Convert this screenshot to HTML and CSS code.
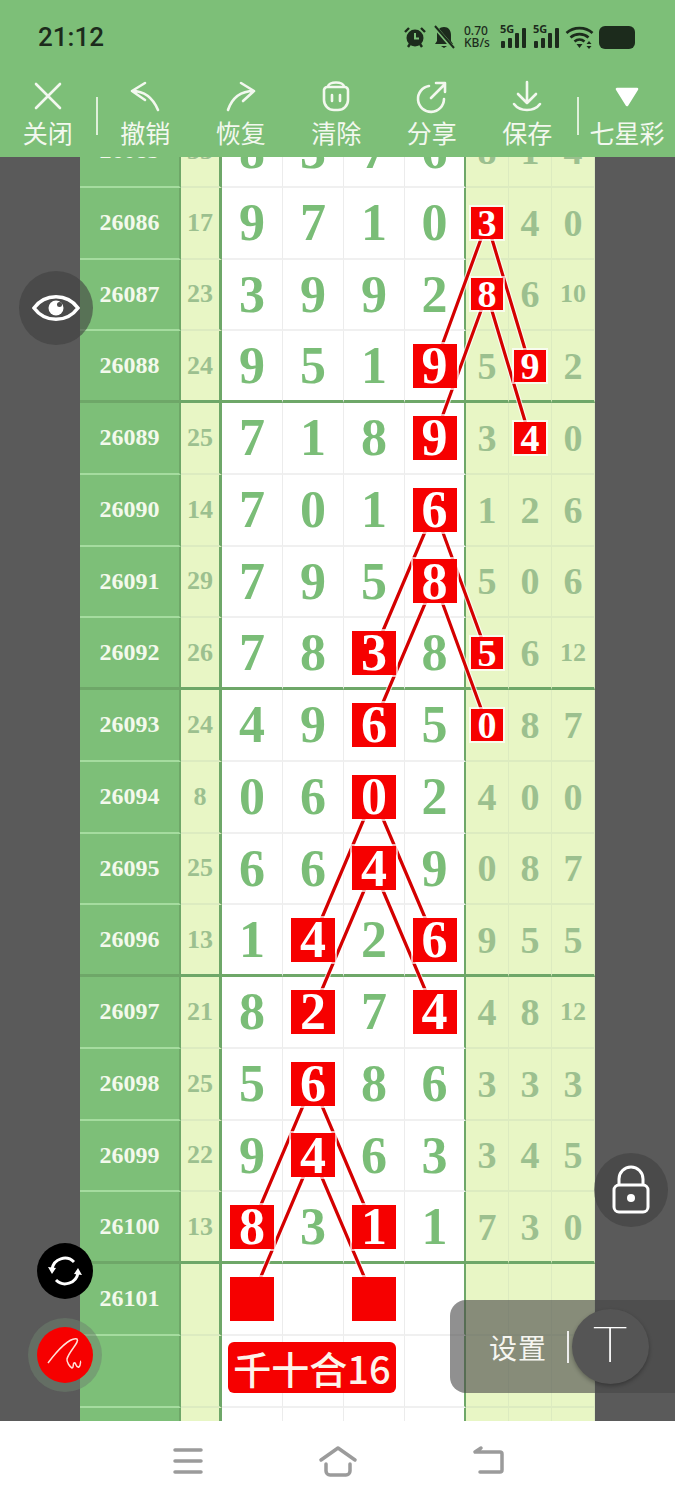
FILE: index.html
```html
<!DOCTYPE html>
<html lang="zh-CN">
<head>
    <meta charset="UTF-8">
    <meta name="viewport" content="width=device-width, initial-scale=1.0">
    <title>七星彩</title>
    <link rel="stylesheet" href="styles.css">
</head>
<body>
    <header class="topbar">
        <div class="status">
            <span class="clock">21:12</span>
            <div class="status-icons">
                <svg class="st-alarm" width="24" height="24" viewBox="0 0 24 24"><circle cx="12" cy="13" r="8.5" fill="#1c2b1c"/><path d="M2 7l4-4M22 7l-4-4M5 22l2-3M19 22l-2-3" stroke="#1c2b1c" stroke-width="2.4" fill="none"/><path d="M12 8v5.5h4" stroke="#7dbf78" stroke-width="2" fill="none"/></svg>
                <svg class="st-bell" width="24" height="24" viewBox="0 0 24 24"><path d="M12 2c-4.500 0-7 3.500-7 8v6l-2 3h18l-2-3v-6c0-4.500-2.500-8-7-8z" fill="#1c2b1c"/><path d="M9 21h6l-3 2z" fill="#1c2b1c"/><path d="M3 2l18 21" stroke="#7dbf78" stroke-width="4"/><path d="M3 1l19 22" stroke="#1c2b1c" stroke-width="2"/></svg>
                <div class="speed"><span>0.70</span><span>KB/s</span></div>
                <div class="sig"><span>5G</span><svg width="27" height="24" viewBox="0 0 27 24"><rect x="1" y="16" width="4" height="7" rx="1"/><rect x="8" y="13" width="4" height="10" rx="1"/><rect x="15" y="8" width="4" height="15" rx="1"/><rect x="22" y="3" width="4" height="20" rx="1"/></svg></div>
                <div class="sig"><span>5G</span><svg width="27" height="24" viewBox="0 0 27 24"><rect x="1" y="16" width="4" height="7" rx="1"/><rect x="8" y="13" width="4" height="10" rx="1"/><rect x="15" y="8" width="4" height="15" rx="1"/><rect x="22" y="3" width="4" height="20" rx="1"/></svg></div>
                <svg class="st-wifi" width="29" height="24" viewBox="0 0 29 24"><path d="M1.500 8c7-6.500 19-6.500 26 0M5.500 12.500c5-4.500 13-4.500 18 0M9.500 16.500c3-2.500 7-2.500 10 0" stroke="#1c2b1c" stroke-width="2.600" fill="none"/><path d="M11.500 19h6l-3 4z" fill="#1c2b1c"/><path d="M24 16l2.500 3h-5zM24 24l2.500-3h-5z" fill="#1c2b1c"/></svg>
                <div class="battery"></div>
            </div>
        </div>
        <nav class="tools">
            <div class="tool">
                <svg class="tool-icon" viewBox="0 0 36 36"><path d="M6 6l24 24M30 6L6 30"/></svg>
                <span>关闭</span>
            </div>
            <i class="tool-sep"></i>
            <div class="tool">
                <svg class="tool-icon" viewBox="0 0 36 36"><path d="M18 5L5 13l13 9M5 13c13 0 21 7 26 19"/></svg>
                <span>撤销</span>
            </div>
            <div class="tool">
                <svg class="tool-icon" viewBox="0 0 36 36"><path d="M18 5l13 8-11 10M31 13C18 13 9 20 5 32"/></svg>
                <span>恢复</span>
            </div>
            <div class="tool">
                <svg class="tool-icon" viewBox="0 0 36 36"><path d="M10 9c0-6 16-6 16 0M6 13a3.500 3.500 0 0 1 3-4h18a3.500 3.500 0 0 1 3 4v9a10 10 0 0 1-10 10h-4a10 10 0 0 1-10-10zM14 17v6M22 17v6"/></svg>
                <span>清除</span>
            </div>
            <div class="tool">
                <svg class="tool-icon" viewBox="0 0 36 36"><path d="M15 8a13 13 0 1 0 15 13M17 20L31 6M22 5h9v9"/></svg>
                <span>分享</span>
            </div>
            <div class="tool">
                <svg class="tool-icon" viewBox="0 0 36 36"><path d="M18 4v21M9 16l9 9 9-9M5 26c6 8 20 8 26 0"/></svg>
                <span>保存</span>
            </div>
            <i class="tool-sep tool-sep-end"></i>
            <div class="tool tool-last">
                <svg class="tool-icon" viewBox="0 0 36 36"><path class="solid" d="M8 11h20l-10 16z"/></svg>
                <span>七星彩</span>
            </div>
        </nav>
    </header>

    <main class="board">
        <div class="sheet">
            <svg class="links" width="515" height="1400" viewBox="80 116 515 1400">
                <defs>
                    <g id="link-set">
                        <path d="M487 222.500L434.500 366M487 222.500L530 366"/>
                        <path d="M487 294.250L434.500 437.750M487 294.250L530 437.750"/>
                        <path d="M434.500 509.500L373.500 653M434.500 509.500L487 653"/>
                        <path d="M434.500 581.250L373.500 724.750M434.500 581.250L487 724.750"/>
                        <path d="M373.500 796.500L312.500 940M373.500 796.500L434.500 940"/>
                        <path d="M373.500 868.250L312.500 1011.750M373.500 868.250L434.500 1011.750"/>
                        <path d="M312.500 1083.500L251.500 1227M312.500 1083.500L373.500 1227"/>
                        <path d="M312.500 1155.250L251.500 1298.750M312.500 1155.250L373.500 1298.750"/>
                    </g>
                </defs>
                <use href="#link-set" class="link-halo"/>
                <use href="#link-set" class="link-line"/>
            </svg>

            <div class="row"><div class="id">26085</div><div class="sum">33</div><div class="d">8</div><div class="d">3</div><div class="d">7</div><div class="d last">6</div><div class="r">8</div><div class="r">1</div><div class="r">4</div></div>
            <div class="row"><div class="id">26086</div><div class="sum">17</div><div class="d">9</div><div class="d">7</div><div class="d">1</div><div class="d last">0</div><div class="r"><b class="hit-s">3</b></div><div class="r">4</div><div class="r">0</div></div>
            <div class="row"><div class="id">26087</div><div class="sum">23</div><div class="d">3</div><div class="d">9</div><div class="d">9</div><div class="d last">2</div><div class="r"><b class="hit-s">8</b></div><div class="r">6</div><div class="r small">10</div></div>
            <div class="row end"><div class="id">26088</div><div class="sum">24</div><div class="d">9</div><div class="d">5</div><div class="d">1</div><div class="d last"><b class="hit">9</b></div><div class="r">5</div><div class="r"><b class="hit-s">9</b></div><div class="r">2</div></div>
            <div class="row"><div class="id">26089</div><div class="sum">25</div><div class="d">7</div><div class="d">1</div><div class="d">8</div><div class="d last"><b class="hit">9</b></div><div class="r">3</div><div class="r"><b class="hit-s">4</b></div><div class="r">0</div></div>
            <div class="row"><div class="id">26090</div><div class="sum">14</div><div class="d">7</div><div class="d">0</div><div class="d">1</div><div class="d last"><b class="hit">6</b></div><div class="r">1</div><div class="r">2</div><div class="r">6</div></div>
            <div class="row"><div class="id">26091</div><div class="sum">29</div><div class="d">7</div><div class="d">9</div><div class="d">5</div><div class="d last"><b class="hit">8</b></div><div class="r">5</div><div class="r">0</div><div class="r">6</div></div>
            <div class="row end"><div class="id">26092</div><div class="sum">26</div><div class="d">7</div><div class="d">8</div><div class="d"><b class="hit">3</b></div><div class="d last">8</div><div class="r"><b class="hit-s">5</b></div><div class="r">6</div><div class="r small">12</div></div>
            <div class="row"><div class="id">26093</div><div class="sum">24</div><div class="d">4</div><div class="d">9</div><div class="d"><b class="hit">6</b></div><div class="d last">5</div><div class="r"><b class="hit-s">0</b></div><div class="r">8</div><div class="r">7</div></div>
            <div class="row"><div class="id">26094</div><div class="sum">8</div><div class="d">0</div><div class="d">6</div><div class="d"><b class="hit">0</b></div><div class="d last">2</div><div class="r">4</div><div class="r">0</div><div class="r">0</div></div>
            <div class="row"><div class="id">26095</div><div class="sum">25</div><div class="d">6</div><div class="d">6</div><div class="d"><b class="hit">4</b></div><div class="d last">9</div><div class="r">0</div><div class="r">8</div><div class="r">7</div></div>
            <div class="row end"><div class="id">26096</div><div class="sum">13</div><div class="d">1</div><div class="d"><b class="hit">4</b></div><div class="d">2</div><div class="d last"><b class="hit">6</b></div><div class="r">9</div><div class="r">5</div><div class="r">5</div></div>
            <div class="row"><div class="id">26097</div><div class="sum">21</div><div class="d">8</div><div class="d"><b class="hit">2</b></div><div class="d">7</div><div class="d last"><b class="hit">4</b></div><div class="r">4</div><div class="r">8</div><div class="r small">12</div></div>
            <div class="row"><div class="id">26098</div><div class="sum">25</div><div class="d">5</div><div class="d"><b class="hit">6</b></div><div class="d">8</div><div class="d last">6</div><div class="r">3</div><div class="r">3</div><div class="r">3</div></div>
            <div class="row"><div class="id">26099</div><div class="sum">22</div><div class="d">9</div><div class="d"><b class="hit">4</b></div><div class="d">6</div><div class="d last">3</div><div class="r">3</div><div class="r">4</div><div class="r">5</div></div>
            <div class="row end"><div class="id">26100</div><div class="sum">13</div><div class="d"><b class="hit">8</b></div><div class="d">3</div><div class="d"><b class="hit">1</b></div><div class="d last">1</div><div class="r">7</div><div class="r">3</div><div class="r">0</div></div>
            <div class="row"><div class="id">26101</div><div class="sum"></div><div class="d"><b class="hit"></b></div><div class="d"></div><div class="d"><b class="hit"></b></div><div class="d last"></div><div class="r"></div><div class="r"></div><div class="r"></div></div>
            <div class="row"><div class="id"></div><div class="sum"></div><div class="d banner-cell"><div class="banner">千十合16</div></div><div class="d"></div><div class="d"></div><div class="d last"></div><div class="r"></div><div class="r"></div><div class="r"></div></div>
            <div class="row"><div class="id"></div><div class="sum"></div><div class="d"></div><div class="d"></div><div class="d"></div><div class="d last"></div><div class="r"></div><div class="r"></div><div class="r"></div></div>
        </div>
    </main>

    <footer class="navbar">
        <svg width="40" height="40" viewBox="0 0 40 40"><path d="M7 9h26M7 20h26M7 31h26"/></svg>
        <svg width="40" height="40" viewBox="0 0 40 40"><path d="M3 19L20 7l17 12M8 23v7a4 4 0 0 0 4 4h16a4 4 0 0 0 4-4v-7"/></svg>
        <svg width="40" height="40" viewBox="0 0 40 40"><path d="M7 11h25a2 2 0 0 1 2 2v16a2 2 0 0 1-2 2H12M7 11l6-4"/></svg>
    </footer>

    <div class="float eye">
        <svg width="48" height="34" viewBox="0 0 48 34"><path d="M2 17C13 2 35 2 46 17 35 32 13 32 2 17z" fill="none" stroke="#fff" stroke-width="3.500"/><circle cx="24" cy="17" r="7.500" fill="#fff"/><circle cx="27.500" cy="13.500" r="2.500" fill="#4a4a4a"/></svg>
    </div>
    <div class="float lock">
        <svg width="40" height="50" viewBox="0 0 40 50"><path d="M8 20v-6a12 12 0 0 1 24 0v6" fill="none" stroke="#fff" stroke-width="3"/><rect x="3" y="20" width="34" height="27" rx="5" fill="none" stroke="#fff" stroke-width="3"/><circle cx="20" cy="33" r="4" fill="#fff"/></svg>
    </div>
    <div class="float sync">
        <svg width="34" height="34" viewBox="0 0 34 34"><path d="M4 15A13 13 0 0 1 26 8M30 19A13 13 0 0 1 8 26" fill="none" stroke="#fff" stroke-width="3"/><path d="M0 13l8 1-4 6zM34 21l-8-1 4-6z" fill="#fff"/></svg>
    </div>
    <div class="float pen">
        <svg width="56" height="56" viewBox="0 0 56 56"><path d="M11 36C20 24 33 10 40 12c3 3-8 12-10 20-.6 3 3 8 5 9 2 0 .5-6 3-5 1 .5 1 5 4 4 2-1 1-6 2-6" fill="none" stroke="#ffe0d8" stroke-width="1.500"/></svg>
    </div>
    <div class="settings">
        <span class="settings-label">设置</span>
        <i class="settings-sep"></i>
        <div class="text-btn"><span>T</span></div>
    </div>
</body>
</html>
```

FILE: styles.css
```css
:root {
    --green: #7dbf78;
    --green-dark: #6ea768;
    --digit: #7abd77;
    --digit-soft: #9cc08f;
    --yellow: #e8f6c5;
    --gray: #5a5a5a;
    --ink: #1c2b1c;
    --red: #f60000;
}
* {
    box-sizing: border-box;
}
body {
    margin: 0;
    width: 675px;
    height: 1500px;
    position: relative;
    overflow: hidden;
    display: flex;
    flex-direction: column;
    background-color: #fff;
    font-family: "Noto Sans CJK SC", "Noto Sans", sans-serif;
}
.topbar {
    height: 157px;
    flex: none;
    background-color: var(--green);
    position: relative;
    z-index: 5;
}
.status {
    height: 75px;
    padding: 0 40px 1px 38px;
    display: flex;
    align-items: center;
    justify-content: space-between;
    color: var(--ink);
}
.clock {
    font-family: Roboto, sans-serif;
    font-size: 26px;
    font-weight: 500;
}
.status-icons {
    display: flex;
    align-items: center;
}
.st-bell {
    margin-left: 5px;
}
.speed {
    margin-left: 8px;
    width: 30px;
    display: flex;
    flex-direction: column;
    font-family: "Noto Sans", sans-serif;
    font-size: 12px;
    line-height: 12px;
    font-weight: 500;
}
.sig {
    margin-left: 6px;
    width: 27px;
    height: 24px;
    position: relative;
    fill: var(--ink);
}
.sig + .sig {
    margin-left: 6px;
}
.sig svg {
    display: block;
}
.sig span {
    position: absolute;
    top: -3px;
    left: 0;
    font-family: "Noto Sans", sans-serif;
    font-size: 11px;
    line-height: 14px;
    font-weight: 700;
}
.st-wifi {
    margin-left: 5px;
}
.battery {
    margin-left: 5px;
    width: 36px;
    height: 23px;
    border-radius: 6px;
    background-color: var(--ink);
    box-shadow: 3px 0 0 -5px #4a6a48;
}
.tools {
    height: 82px;
    display: flex;
    align-items: flex-start;
}
.tool {
    flex: none;
    width: 95.500px;
    display: flex;
    flex-direction: column;
    align-items: center;
    color: #f3f8ef;
    font-size: 25px;
    line-height: 36px;
}
.tool-last {
    flex: 1;
    width: auto;
}
.tool-icon {
    width: 36px;
    height: 36px;
    margin-top: 3px;
    fill: none;
    stroke: #f3f8ef;
    stroke-width: 2.600;
    stroke-linecap: round;
    stroke-linejoin: round;
}
.tool-icon .solid {
    fill: #fff;
    stroke: #fff;
}
.tool-sep {
    flex: none;
    width: 2px;
    height: 38px;
    margin-top: 22px;
    background-color: #dff0da;
}
.tool-sep-end {
    margin-left: 2px;
}
.board {
    flex: 1;
    min-height: 0;
    overflow: hidden;
    background-color: var(--gray);
    display: flex;
    justify-content: center;
    align-items: flex-start;
}
.sheet {
    width: 515px;
    margin-top: -41px;
    position: relative;
    flex: none;
}
.links {
    position: absolute;
    top: 0;
    left: 0;
    z-index: 1;
    pointer-events: none;
}
.link-halo {
    fill: none;
    stroke: rgba(255, 255, 255, 0.7);
    stroke-width: 5.500;
}
.link-line {
    fill: none;
    stroke: #d40000;
    stroke-width: 3.200;
}
.row {
    display: grid;
    grid-template-columns: 101px 41px repeat(4, 61px) repeat(3, 43px);
    height: 71.750px;
}
.row > div {
    display: flex;
    align-items: center;
    justify-content: center;
    font-family: "Liberation Serif", serif;
    font-weight: 700;
}
.id {
    background-color: var(--green);
    color: #f3f9ec;
    font-size: 24px;
    border-right: 2px solid var(--green-dark);
    border-bottom: 2px solid #a5dc9f;
}
.sum {
    background-color: var(--yellow);
    color: var(--digit-soft);
    font-size: 26px;
    border-right: 3px solid var(--green-dark);
    border-bottom: 2px solid #dcebc0;
}
.d {
    background-color: #fff;
    color: var(--digit);
    font-size: 52px;
    border-right: 1px solid #ececec;
    border-bottom: 2px solid #f0f0f0;
}
.row > .last {
    border-right: 2px solid var(--green-dark);
}
.r {
    background-color: var(--yellow);
    color: var(--digit-soft);
    font-size: 38px;
    border-right: 1px solid #dcebc0;
    border-bottom: 2px solid #dcebc0;
}
.row > .small {
    font-size: 26px;
}
.row.end > div {
    border-bottom: 3px solid var(--green-dark);
}
.hit,
.hit-s {
    display: flex;
    align-items: center;
    justify-content: center;
    position: relative;
    z-index: 2;
    background-color: var(--red);
    color: #fff;
    box-shadow: 0 0 0 2px rgba(255, 255, 255, 0.7);
}
.hit {
    width: 44px;
    height: 44px;
}
.hit-s {
    width: 32px;
    height: 32px;
}
.banner-cell {
    position: relative;
}
.banner {
    position: absolute;
    top: 6px;
    left: 6px;
    z-index: 2;
    width: 168px;
    height: 51px;
    border-radius: 6px;
    background-color: var(--red);
    color: #fdf3ea;
    font-family: "Noto Sans CJK SC", sans-serif;
    font-size: 38px;
    font-weight: 500;
    line-height: 51px;
    text-align: center;
    white-space: nowrap;
}
.navbar {
    height: 79px;
    flex: none;
    background-color: #fff;
    display: flex;
    align-items: flex-start;
    justify-content: center;
    gap: 110px;
    padding-top: 20px;
}
.navbar svg {
    fill: none;
    stroke: #9b9b9b;
    stroke-width: 3.500;
    stroke-linecap: round;
    stroke-linejoin: round;
}
.float {
    position: absolute;
    z-index: 6;
    border-radius: 50%;
    display: flex;
    align-items: center;
    justify-content: center;
}
.eye {
    left: 19px;
    top: 271px;
    width: 74px;
    height: 74px;
    background-color: rgba(64, 64, 64, 0.6);
}
.lock {
    left: 594px;
    top: 1153px;
    width: 74px;
    height: 74px;
    background-color: rgba(64, 64, 64, 0.6);
}
.sync {
    left: 37px;
    top: 1243px;
    width: 56px;
    height: 56px;
    background-color: #000;
}
.pen {
    left: 37px;
    top: 1327px;
    width: 56px;
    height: 56px;
    background-color: var(--red);
    box-shadow: 0 0 0 9px rgba(110, 130, 110, 0.5);
}
.settings {
    position: absolute;
    z-index: 6;
    left: 450px;
    top: 1300px;
    width: 225px;
    height: 93px;
    padding-left: 39px;
    display: flex;
    align-items: center;
    border-radius: 16px 0 0 16px;
    background-color: rgba(70, 70, 70, 0.6);
}
.settings-label {
    color: #f5f5f0;
    font-size: 28px;
    letter-spacing: 1px;
}
.settings-sep {
    width: 2px;
    height: 32px;
    margin-left: 20px;
    background-color: #eee;
}
.text-btn {
    width: 77px;
    height: 75px;
    margin-left: 3px;
    border-radius: 50%;
    background-color: #555;
    box-shadow: 0 2px 4px rgba(0, 0, 0, 0.3);
    display: flex;
    align-items: center;
    justify-content: center;
}
.text-btn span {
    color: #fff;
    font-family: "Noto Sans", sans-serif;
    font-size: 48px;
    font-weight: 100;
    line-height: 1;
    transform: scaleX(1.35) translateY(-3px);
}
```
